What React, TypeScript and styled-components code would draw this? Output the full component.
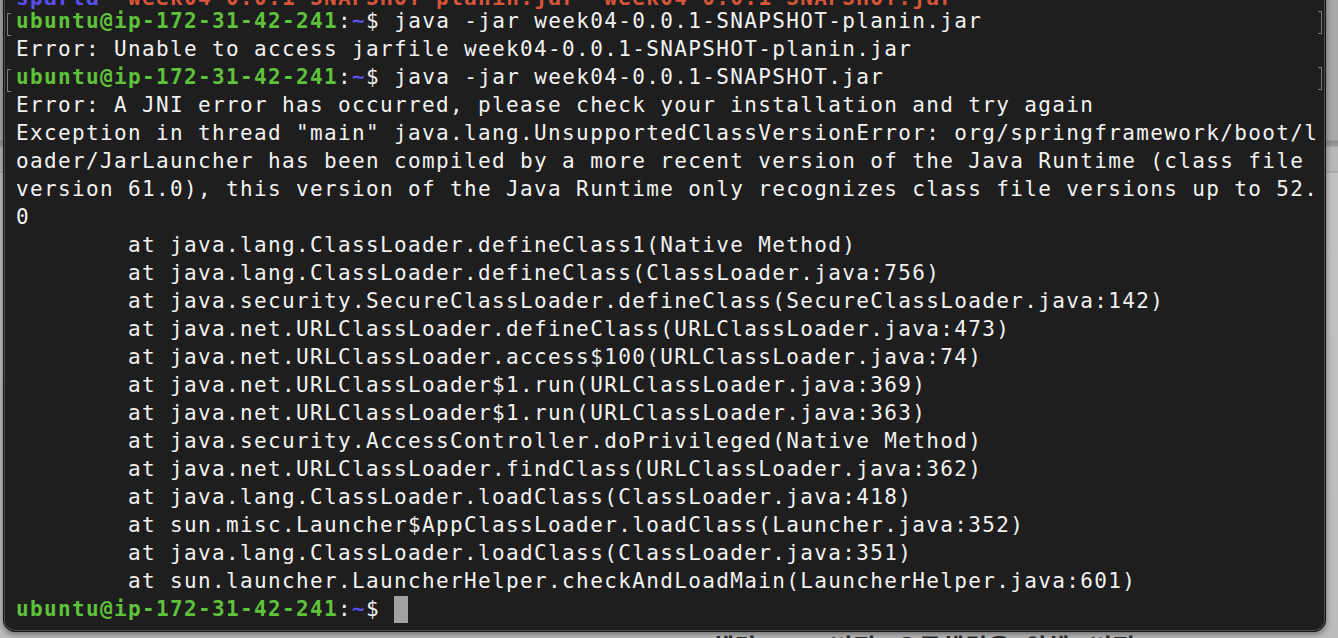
import React from "react";
import styled, { createGlobalStyle } from "styled-components";

const Global = createGlobalStyle`
  html, body { margin: 0; padding: 0; overflow: hidden; }
  body { background: #b4b4b4; }
`;

const Page = styled.div`
  width: 1338px;
  height: 638px;
  overflow: hidden;
  display: flex;
  flex-direction: column;
  background:
    linear-gradient(180deg, #a9a9a9 0px, #a9a9a9 140px, #8e8e8e 141px, #9a9a9a 146px, #b8b8b8 147px, #b8b8b8 171px, #9c9c9c 172px, #c2c2c2 173px, #bcbcbc 638px);
`;

const Window = styled.div`
  position: relative;
  flex: none;
  margin: -30px 0 0 3px;
  width: 1323px;
  height: 662px;
  box-sizing: border-box;
  background: #1e1e1e;
  border: 1px solid #161616;
  border-radius: 0 0 12px 12px;
  box-shadow: inset 0 0 0 1px #4c4c4c, 0 2px 6px rgba(0, 0, 0, 0.45);
  padding: 8px 0 0 12px;
  overflow: hidden;
`;

const Screen = styled.div`
  font-family: "DejaVu Sans Mono", "Liberation Mono", monospace;
  font-size: 21px;
  letter-spacing: 1.36px;
  color: #f2f2f2;
  -webkit-font-smoothing: antialiased;
`;

const Line = styled.div<{ $mark?: boolean; $partial?: boolean }>`
  position: relative;
  height: 28px;
  line-height: 28px;
  white-space: pre;
  ${(p) =>
    p.$partial
      ? `
    margin-top: 5px;
    height: 23px;
  `
      : ""}
  ${(p) =>
    p.$mark
      ? `
    &::before {
      content: "";
      position: absolute;
      left: -9px;
      top: 6px;
      width: 3px;
      height: 21px;
      border: 1.5px solid #7a7a7a;
      border-right: none;
    }
    &::after {
      content: "";
      position: absolute;
      left: 1302px;
      top: 4px;
      width: 3px;
      height: 21px;
      border: 1.5px solid #7a7a7a;
      border-left: none;
    }
  `
      : ""}
`;

const User = styled.span`
  color: #5fc23b;
  font-weight: bold;
`;

const Dir = styled.span`
  color: #5b4ff2;
  font-weight: bold;
`;

const Archive = styled.span`
  color: #d9553a;
  font-weight: bold;
`;

const Cursor = styled.span`
  display: inline-block;
  width: 14px;
  height: 27px;
  vertical-align: -7px;
  background: #a2a2a2;
`;

const Backdrop = styled.div`
  flex: none;
  margin-top: 2px;
  padding-left: 712px;
  font-family: "Noto Sans CJK KR", "Noto Sans", sans-serif;
  font-size: 24px;
  line-height: 24px;
  font-weight: bold;
  color: #2a2a2a;
  white-space: pre;
  letter-spacing: 1px;
`;

const Prompt: React.FC = () => (
  <>
    <User>ubuntu@ip-172-31-42-241</User>:<Dir>~</Dir>
    {"$ "}
  </>
);

const trace = [
  "java.lang.ClassLoader.defineClass1(Native Method)",
  "java.lang.ClassLoader.defineClass(ClassLoader.java:756)",
  "java.security.SecureClassLoader.defineClass(SecureClassLoader.java:142)",
  "java.net.URLClassLoader.defineClass(URLClassLoader.java:473)",
  "java.net.URLClassLoader.access$100(URLClassLoader.java:74)",
  "java.net.URLClassLoader$1.run(URLClassLoader.java:369)",
  "java.net.URLClassLoader$1.run(URLClassLoader.java:363)",
  "java.security.AccessController.doPrivileged(Native Method)",
  "java.net.URLClassLoader.findClass(URLClassLoader.java:362)",
  "java.lang.ClassLoader.loadClass(ClassLoader.java:418)",
  "sun.misc.Launcher$AppClassLoader.loadClass(Launcher.java:352)",
  "java.lang.ClassLoader.loadClass(ClassLoader.java:351)",
  "sun.launcher.LauncherHelper.checkAndLoadMain(LauncherHelper.java:601)",
];

export default function App() {
  return (
    <>
      <Global />
      <Page>
        <Window>
          <Screen>
            <Line $partial>
              <Dir>sparta</Dir>
              {"  "}
              <Archive>week04-0.0.1-SNAPSHOT-planin.jar</Archive>
              {"  "}
              <Archive>week04-0.0.1-SNAPSHOT.jar</Archive>
            </Line>
            <Line $mark>
              <Prompt />java -jar week04-0.0.1-SNAPSHOT-planin.jar
            </Line>
            <Line>Error: Unable to access jarfile week04-0.0.1-SNAPSHOT-planin.jar</Line>
            <Line $mark>
              <Prompt />java -jar week04-0.0.1-SNAPSHOT.jar
            </Line>
            <Line>Error: A JNI error has occurred, please check your installation and try again</Line>
            <Line>Exception in thread "main" java.lang.UnsupportedClassVersionError: org/springframework/boot/l</Line>
            <Line>oader/JarLauncher has been compiled by a more recent version of the Java Runtime (class file</Line>
            <Line>version 61.0), this version of the Java Runtime only recognizes class file versions up to 52.</Line>
            <Line>0</Line>
            {trace.map((t, i) => (
              <Line key={i}>{"        at " + t}</Line>
            ))}
            <Line>
              <Prompt />
              <Cursor />
            </Line>
          </Screen>
        </Window>
        <Backdrop>해당 Java 버전   오류해결을  위해   버전</Backdrop>
      </Page>
    </>
  );
}
